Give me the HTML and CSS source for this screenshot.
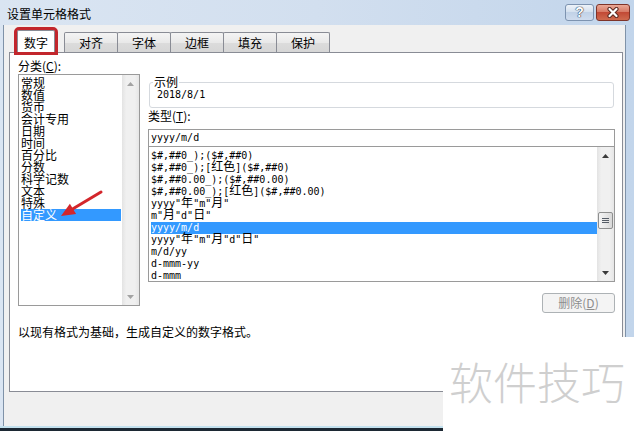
FILE: index.html
```html
<!DOCTYPE html>
<html lang="zh-CN">
<head>
<meta charset="utf-8">
<title>设置单元格格式</title>
<link rel="stylesheet" href="styles.css">
</head>
<body>
<div class="screen">
  <div class="window">
    <div class="titlebar">
      <span class="title">设置单元格格式</span>
      <div class="tb-buttons">
        <span class="tb-btn help">?</span>
        <span class="tb-btn close">
          <svg width="14" height="11" viewBox="0 0 14 11">
            <path d="M3.5 2 L10.5 9 M10.5 2 L3.5 9" stroke="#5b2a22" stroke-width="4.2" stroke-linecap="round" fill="none"/>
            <path d="M3.5 2 L10.5 9 M10.5 2 L3.5 9" stroke="#ffffff" stroke-width="2.2" stroke-linecap="round" fill="none"/>
          </svg>
        </span>
      </div>
    </div>
    <div class="client">
      <div class="tabs">
        <div class="tab active">数字</div>
        <div class="tab">对齐</div>
        <div class="tab">字体</div>
        <div class="tab">边框</div>
        <div class="tab">填充</div>
        <div class="tab">保护</div>
      </div>
      <div class="panel">
        <div class="cols">
          <div class="left">
            <div class="label">分类(<u>C</u>):</div>
            <div class="listbox cat-list">
              <ul class="items">
                <li class="item">常规</li>
                <li class="item">数值</li>
                <li class="item">货币</li>
                <li class="item">会计专用</li>
                <li class="item">日期</li>
                <li class="item">时间</li>
                <li class="item">百分比</li>
                <li class="item">分数</li>
                <li class="item">科学记数</li>
                <li class="item">文本</li>
                <li class="item">特殊</li>
                <li class="item sel">自定义</li>
              </ul>
              <div class="vscroll off">
                <span class="sb-btn"><svg width="7" height="4" viewBox="0 0 7 4"><path d="M0 4 L3.5 0 L7 4 Z"/></svg></span>
                <span class="sb-track"></span>
                <span class="sb-btn"><svg width="7" height="4" viewBox="0 0 7 4"><path d="M0 0 L7 0 L3.5 4 Z"/></svg></span>
              </div>
            </div>
          </div>
          <div class="right">
            <fieldset class="sample">
              <legend>示例</legend>
              <div class="sample-val">2018/8/1</div>
            </fieldset>
            <div class="label type-label">类型(<u>T</u>):</div>
            <div class="input">yyyy/m/d</div>
            <div class="listbox type-list">
              <ul class="items mono">
                <li class="item">$#,##0_);($#,##0)</li>
                <li class="item">$#,##0_);[<span class="cj">红色</span>]($#,##0)</li>
                <li class="item">$#,##0.00_);($#,##0.00)</li>
                <li class="item">$#,##0.00_);[<span class="cj">红色</span>]($#,##0.00)</li>
                <li class="item">yyyy"<span class="cj">年</span>"m"<span class="cj">月</span>"</li>
                <li class="item">m"<span class="cj">月</span>"d"<span class="cj">日</span>"</li>
                <li class="item sel">yyyy/m/d</li>
                <li class="item">yyyy"<span class="cj">年</span>"m"<span class="cj">月</span>"d"<span class="cj">日</span>"</li>
                <li class="item">m/d/yy</li>
                <li class="item">d-mmm-yy</li>
                <li class="item">d-mmm</li>
              </ul>
              <div class="vscroll">
                <span class="sb-btn"><svg width="7" height="4" viewBox="0 0 7 4"><path d="M0 4 L3.5 0 L7 4 Z"/></svg></span>
                <span class="sb-track">
                  <span class="thumb">
                    <svg width="7" height="7" viewBox="0 0 7 7"><path d="M0 1.5 H7 M0 3.5 H7 M0 5.5 H7" stroke="#555c66" stroke-width="1"/></svg>
                  </span>
                </span>
                <span class="sb-btn"><svg width="7" height="4" viewBox="0 0 7 4"><path d="M0 0 L7 0 L3.5 4 Z"/></svg></span>
              </div>
            </div>
            <div class="btn-row"><button class="btn" disabled>删除(<u>D</u>)</button></div>
          </div>
        </div>
        <p class="desc">以现有格式为基础，生成自定义的数字格式。</p>
      </div>
    </div>
  </div>
  <div class="watermark">软件技巧</div>
  <svg class="arrow" width="52" height="36" viewBox="0 0 52 36">
    <path d="M46 6 L18 22.8" stroke="#d3262b" stroke-width="3" stroke-linecap="round" fill="none"/>
    <path d="M6 30 L21.1 28 L14.9 17.7 Z" fill="#d3262b"/>
  </svg>
</div>
</body>
</html>
```
FILE: styles.css
```css
* { box-sizing: border-box; }
html, body { margin: 0; padding: 0; }
body {
  width: 634px;
  height: 431px;
  overflow: hidden;
  background: #1c2833;
  font-family: "Noto Sans CJK SC", "Liberation Sans", sans-serif;
  font-size: 12px;
  color: #000;
}
.screen { position: relative; width: 634px; height: 431px; }

.window {
  display: flex;
  flex-direction: column;
  height: 428px;
  padding: 0 8px 0 3px;
  background: linear-gradient(90deg, #dae5f2 0%, #d2dfef 50%, #c2d5eb 100%);
  border-bottom: 2px solid #c3e1ee;
}

.titlebar {
  display: flex;
  align-items: flex-start;
  height: 25px;
  flex: none;
  margin-right: -8px;
  padding: 0 4px;
}
.title { margin-top: 8px; line-height: 12px; color: #000; }
.tb-buttons { display: flex; gap: 2px; margin-left: auto; margin-top: 4px; }
.tb-btn {
  display: flex;
  align-items: center;
  justify-content: center;
  height: 17px;
  border-radius: 3px;
}
.help {
  width: 29px;
  border: 1px solid #7d93b0;
  background: linear-gradient(#eef3f9, #d5e1ef 45%, #c1d2e7 50%, #cfdcee);
  color: #fff;
  font-family: "Liberation Sans", sans-serif;
  font-weight: bold;
  font-size: 14px;
  line-height: 15px;
  text-shadow: 0 0 1px #2e3d52, 0 0 1px #2e3d52, 0 0 1px #2e3d52;
}
.close {
  width: 34px;
  border: 1px solid #7e3328;
  background: linear-gradient(#eaa896, #d77a66 45%, #c24a36 50%, #cf6a4e);
}

.client {
  flex: 1;
  display: flex;
  flex-direction: column;
  background: #f0f0f0;
  border: 1px solid #7f92a8;
  border-top: 0;
  border-bottom: 0;
}

.tabs {
  display: flex;
  align-items: flex-end;
  height: 22px;
  margin-top: 5px;
  padding-left: 13px;
}
.tab {
  width: 54px;
  height: 20px;
  margin-left: -1px;
  padding-top: 1px;
  line-height: 18px;
  text-align: center;
  border: 1px solid #898c95;
  border-bottom: 0;
  border-radius: 2px 2px 0 0;
  background: linear-gradient(#f4f4f4, #e9e9e9 50%, #dcdcdc 52%, #d6d6d6);
}
.tab.active {
  position: relative;
  z-index: 2;
  width: 38px;
  height: 22px;
  margin: 0 10px 0 0;
  padding-top: 3px;
  background: #fff;
  outline: 3px solid #c2262c;
}

.panel {
  height: 340px;
  margin: 0 2px 0 5px;
  padding: 6px 7px 0 8px;
  background: #fff;
  border: 1px solid #898c95;
}
.cols { display: flex; gap: 8px; }
.left { width: 122px; flex: none; }
.right { flex: 1; padding-top: 16px; }

.label { height: 15px; line-height: 14px; white-space: nowrap; }

.listbox { display: flex; border: 1px solid #9a9a9a; background: #fff; }
.items { flex: 1; list-style: none; margin: 0; overflow: hidden; }
.item { height: 12px; line-height: 12px; white-space: nowrap; }
.item.sel { background: #3399ff; color: #fff; }

.cat-list { height: 232px; }
.cat-list .items { padding: 2px 1px 0 2px; }

.mono, .sample-val, .input {
  font-family: "DejaVu Sans Mono", "Liberation Mono", monospace;
  font-size: 10px;
}
.cj {
  font-family: "Noto Sans CJK SC", sans-serif;
  font-size: 12px;
  line-height: 0;
}

.vscroll {
  width: 17px;
  flex: none;
  display: flex;
  flex-direction: column;
  background: linear-gradient(90deg, #e3e3e3, #f0f0f0 25%, #f0f0f0 75%, #e6e6e6);
  color: #3b3b3b;
}
.vscroll.off { color: #a3a3a3; }
.sb-btn {
  height: 17px;
  flex: none;
  display: flex;
  align-items: center;
  justify-content: center;
}
.sb-btn svg { fill: currentColor; }
.sb-track { flex: 1; display: flex; flex-direction: column; }
.thumb {
  height: 17px;
  margin: 48px 1px 0 1px;
  display: flex;
  align-items: center;
  justify-content: center;
  border: 1px solid #8e8f8f;
  border-radius: 2px;
  background: linear-gradient(90deg, #f4f4f4, #e8e8e8 50%, #d8d8d8);
}

.sample {
  margin: 0 1px;
  padding: 0 6px 6px 3px;
  min-width: 0;
  border: 1px solid #d5d9de;
  border-radius: 3px;
}
.sample legend { padding: 0 1px; line-height: 14px; }
.sample-val { line-height: 12px; padding-left: 4px; }

.type-label { height: 21px; padding-top: 1px; }

.input {
  height: 18px;
  padding-left: 2px;
  line-height: 16px;
  border: 1px solid #9a9a9a;
  background: #fff;
}
.type-list { height: 136px; margin-top: -1px; }
.type-list .items { padding: 3px 0 0 2px; }

.btn-row { display: flex; justify-content: flex-end; margin-top: 11px; }
.btn {
  width: 73px;
  height: 20px;
  padding: 0;
  font-family: "Noto Sans CJK SC", sans-serif;
  font-size: 12px;
  line-height: 18px;
  color: #8d8d8d;
  background: #f4f4f4;
  border: 1px solid #adb2b5;
  border-radius: 3px;
}

.desc { margin: 12px 0 0; line-height: 14px; }

.watermark {
  position: absolute;
  left: 443px;
  top: 337px;
  width: 191px;
  height: 94px;
  padding: 22px 0 0 6px;
  background: #fff;
  color: #cfcfcf;
  font-size: 44px;
  font-weight: 300;
  line-height: 44px;
  white-space: nowrap;
}
.arrow { position: absolute; left: 55px; top: 186px; }
```
